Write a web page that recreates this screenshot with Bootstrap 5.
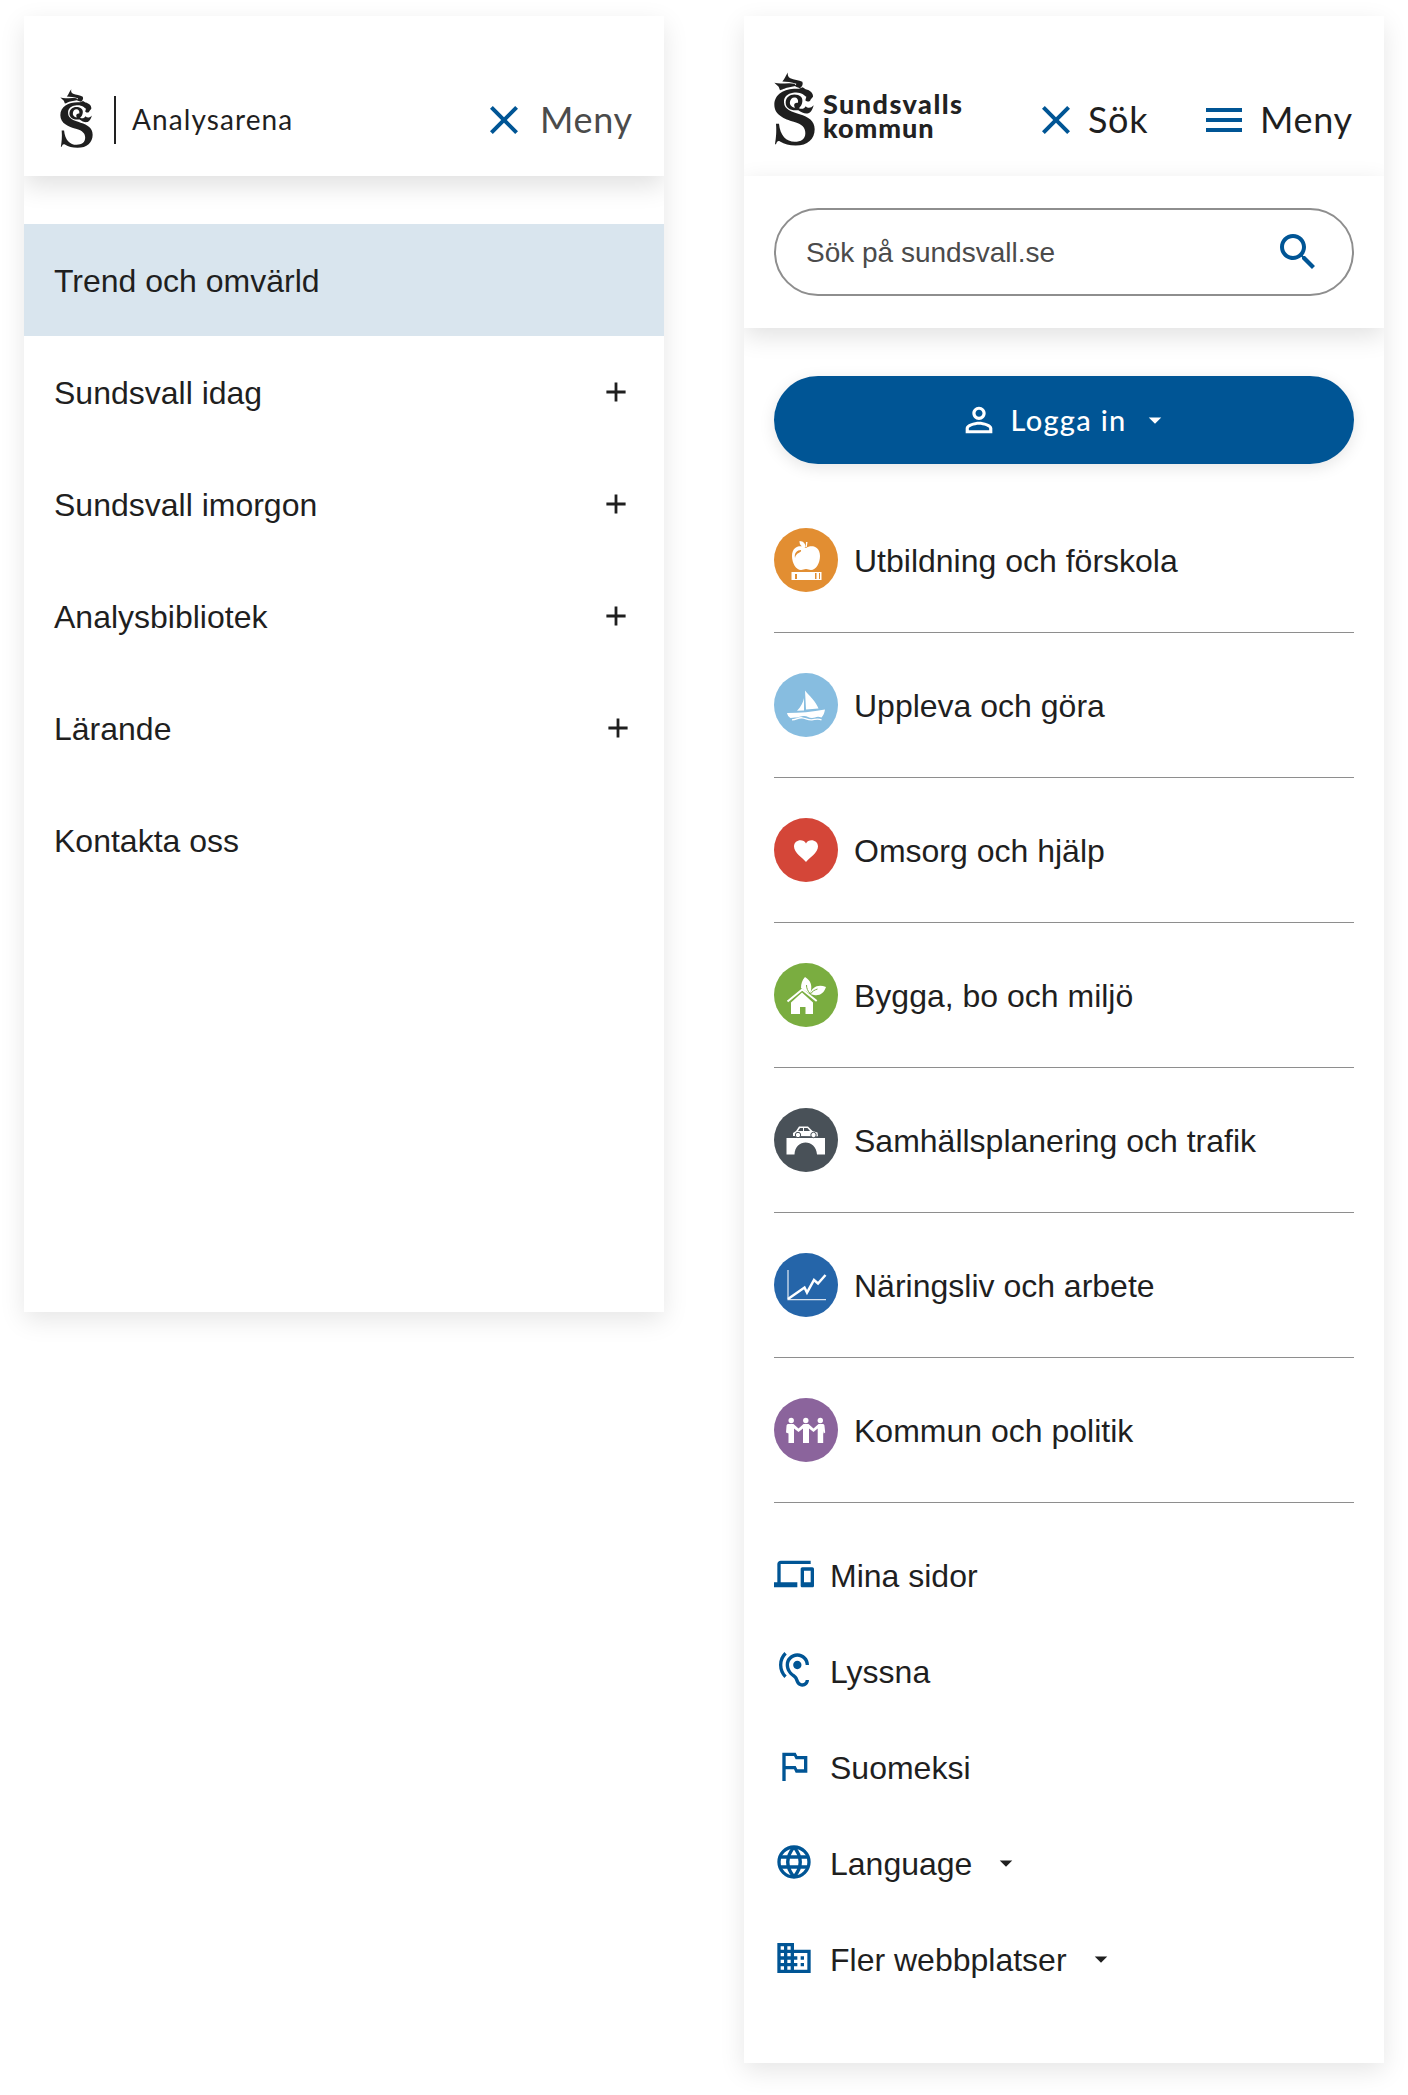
<!DOCTYPE html>
<html lang="sv">
<head>
<meta charset="utf-8">
<meta name="viewport" content="width=device-width, initial-scale=1">
<title>Sundsvalls kommun</title>
<link href="https://cdn.jsdelivr.net/npm/bootstrap@5.3.0/dist/css/bootstrap.min.css" rel="stylesheet">
<style>
body{background:#fff;color:#1f1f1f;font-family:"Liberation Sans",Arial,sans-serif;font-size:32px;line-height:1.2}
a{color:inherit;text-decoration:none}
svg{display:block;flex:none;fill:currentColor}
.stage{padding:16px 24px 32px;gap:80px}
.phone{width:640px;background:#fff;box-shadow:0 8px 24px rgba(0,0,0,.1)}
.phone-short{height:1296px}
.phone-tall{height:2047px}
.topbar{height:160px;padding:48px 30px 0 30px}
.bar-item{height:112px}
.raised{box-shadow:0 10px 24px rgba(0,0,0,.12);clip-path:inset(0 0 -50px 0)}
.head-font{font-family:Lato,sans-serif}
.blue{color:#005595}
.ico40{width:40px;height:40px}
.ico48{width:48px;height:48px}
.caret{width:30px;height:30px}
.tree a{height:112px;padding:2px 36px 0 30px}
.tree svg{margin:0 2px 2px 0}
.tree .inner svg{margin-right:0}
.tree .outer svg{margin-right:2px}
.tree a.current{background:#d9e5ee}
.crest{margin:0 21px 3px 6px}
.rule{width:2px;height:48px;background:#222}
.sitename{font-size:28px;letter-spacing:1.1px}
.toggler{font-size:36px}
.toggler svg.wide{margin-right:12px}
.w-meny{width:94px;letter-spacing:.7px}
.w-sok{width:64px;letter-spacing:.7px}
.muted-ink{color:#4b4b4b}
.wordmark{font-weight:900;font-size:27px;line-height:24px;color:#222;padding-top:20px}
.wordmark .w1{letter-spacing:1.45px}
.wordmark .w2{letter-spacing:.95px}
.searchbox{height:152px;padding:32px 30px;position:relative;background:#fff;box-shadow:0 8px 24px rgba(0,0,0,.12);clip-path:inset(-30px 0 -50px 0)}
.searchbox .field{height:88px;border:2px solid #8e8e8e;border-radius:44px;padding:0 30px}
.searchbox input{font-size:28px;background:none;min-width:0;padding:2px 0 0}
.searchbox input::placeholder{color:#4b4b4b;opacity:1}
.login{height:88px;border-radius:44px;background:#005595;color:#fff;font-size:29px;font-weight:500;box-shadow:0 4px 16px rgba(0,0,0,.1);gap:12px}
.login span{width:117px;letter-spacing:1.3px;white-space:nowrap}
.topics a{height:145px;padding-top:2px;border-bottom:1px solid #8e8e8e}
.topics svg{margin-bottom:2px}
.tools a{height:96px;padding-top:2px}
.tools .caret{margin:0 0 2px 3px}
</style>
<script src="https://cdn.jsdelivr.net/npm/bootstrap@5.3.0/dist/js/bootstrap.bundle.min.js"></script>
</head>
<body>
<svg class="d-none" xmlns="http://www.w3.org/2000/svg">
  <symbol id="dragon" viewBox="103 95 123 221">
    <path d="M178 145C140 142 104 158 104 193C104 224 135 236 162 244C188 251 197 262 197 278C197 295 184 304 165 304C140 304 121 285 118 250H109C111 275 109 292 106 311H109C112 303 115 300 121 303C135 311 148 315 168 315C204 315 225 295 225 266C225 240 206 229 180 221C155 213 134 207 133 186C132 168 144 160 160 157C184 153 192 164 200 169L197 179C204 186 211 184 213 177L220 169C221 158 212 149 198 146L189 140Z"/>
    <path fill-rule="evenodd" d="M138 187C138 171 150 162 164 162C181 162 190 171 188 184C187 193 183 198 178 203C187 207 193 205 198 197C205 204 214 203 222 194C219 207 212 218 203 219C194 220 184 215 176 209C155 212 138 204 138 187ZM151 184C149 193 155 200 166 202C160 191 166 187 175 187C177 177 172 171 164 171C157 171 152 177 151 184Z"/>
    <path d="M104 127C125 133 145 125 164 130L170 136L146 141C133 143 127 149 121 149L117 139ZM145 96C143 103 145 110 152 113C162 118 178 118 188 124C191 131 188 138 181 143L167 138L170 130C156 124 139 124 128 123C135 117 138 104 145 96Z"/>
  </symbol>
  <symbol id="close" viewBox="0 0 24 24"><path d="M19 6.410 17.590 5 12 10.590 6.410 5 5 6.410 10.590 12 5 17.590 6.410 19 12 13.410 17.590 19 19 17.590 13.410 12z"/></symbol>
  <symbol id="plus" viewBox="0 0 20 20"><path d="M8.600.4h2.800v8.200h8.200v2.800h-8.200v8.200H8.600v-8.200H.4V8.600h8.200z"/></symbol>
  <symbol id="drop" viewBox="0 0 24 24"><path d="m7 10 5 5 5-5z"/></symbol>
</svg>

<div class="stage d-flex align-items-start">
  <section class="phone phone-short">
    <header class="topbar raised d-flex justify-content-between align-items-start">
      <a href="#" class="bar-item d-flex align-items-center">
        <svg class="crest" width="33" height="59"><use href="#dragon"/></svg>
        <span class="rule"></span>
        <span class="sitename head-font ms-3">Analysarena</span>
      </a>
      <a href="#" class="bar-item toggler muted-ink head-font d-flex align-items-center">
        <svg class="ico48 blue wide"><use href="#close"/></svg><span class="w-meny">Meny</span>
      </a>
    </header>
    <nav class="tree pt-5">
      <a href="#" class="current d-flex align-items-center">Trend och omvärld</a>
      <a href="#" class="outer d-flex align-items-center justify-content-between">Sundsvall idag<svg width="20" height="20"><use href="#plus"/></svg></a>
      <a href="#" class="outer d-flex align-items-center justify-content-between">Sundsvall imorgon<svg width="20" height="20"><use href="#plus"/></svg></a>
      <a href="#" class="outer d-flex align-items-center justify-content-between">Analysbibliotek<svg width="20" height="20"><use href="#plus"/></svg></a>
      <a href="#" class="d-flex align-items-center justify-content-between">Lärande<svg class="me-0" width="20" height="20"><use href="#plus"/></svg></a>
      <a href="#" class="d-flex align-items-center">Kontakta oss</a>
    </nav>
  </section>

  <section class="phone phone-tall">
    <header class="topbar d-flex align-items-start">
      <a href="#" class="d-flex me-auto pt-2">
        <svg width="41" height="74"><use href="#dragon"/></svg>
        <span class="wordmark head-font ms-2"><span class="w1 d-block">Sundsvalls</span><span class="w2 d-block">kommun</span></span>
      </a>
      <div class="bar-item toggler head-font d-flex align-items-center">
        <a href="#" class="d-flex align-items-center me-5"><svg class="ico48 blue me-2"><use href="#close"/></svg><span class="w-sok">Sök</span></a>
        <a href="#" class="d-flex align-items-center"><svg class="ico48 blue wide" viewBox="0 0 24 24"><path d="M3 18h18v-2H3zm0-5h18v-2H3zm0-7v2h18V6z"/></svg><span class="w-meny">Meny</span></a>
      </div>
    </header>
    <form class="searchbox">
      <div class="field d-flex align-items-center">
        <input class="flex-grow-1 border-0" type="text" placeholder="Sök på sundsvall.se" aria-label="Sök">
        <svg class="ico48 blue" viewBox="0 0 24 24"><path d="M15.500 14h-.79l-.28-.27C15.410 12.590 16 11.110 16 9.500 16 5.910 13.090 3 9.500 3S3 5.910 3 9.500 5.910 16 9.500 16c1.610 0 3.090-.59 4.230-1.570l.27.28v.79l5 4.990L20.490 19zm-6 0C7.010 14 5 11.990 5 9.500S7.010 5 9.500 5 14 7.010 14 9.500 11.990 14 9.500 14z"/></svg>
      </div>
    </form>
    <div class="pt-5" style="padding:0 30px">
      <button type="button" class="login head-font border-0 w-100 d-flex align-items-center justify-content-center">
        <svg class="ico40" viewBox="0 0 24 24"><path d="M12 5.900c1.160 0 2.100.94 2.100 2.100s-.94 2.100-2.100 2.100S9.900 9.160 9.900 8s.94-2.100 2.100-2.100m0 9c2.970 0 6.100 1.460 6.100 2.100v1.100H5.900V17c0-.64 3.130-2.100 6.100-2.100M12 4C9.790 4 8 5.790 8 8s1.790 4 4 4 4-1.790 4-4-1.790-4-4-4zm0 9c-2.670 0-8 1.340-8 4v3h16v-3c0-2.660-5.330-4-8-4z"/></svg>
        <span class="text-start">Logga in</span>
        <svg class="caret"><use href="#drop"/></svg>
      </button>
      <nav class="topics pt-4">
        <a href="#" class="d-flex align-items-center gap-3">
          <svg width="64" height="64" viewBox="0 0 64 64"><circle cx="32" cy="32" r="32" fill="#e28e32"/><g fill="#fff"><path d="M32 20c4-3 14-3 14 8 0 7-4 14-9 14-2 0-3-1-5-1s-3 1-5 1c-5 0-9-7-9-14 0-11 10-11 14-8zM25.500 13c4 0 6 3 6 6-4 0-6-2-6-6zM32 14h1.500l-.7 5h-1z"/><path d="M17.500 44h30v8h-30z"/></g><path d="M21 30c-1-5 2-8 6-8 1 3-5 2-6 8zM21 46h2v5h-2zm20-1h1.500v6H41zm4 0h1v6h-1z" fill="#e28e32"/></svg>
          Utbildning och förskola</a>
        <a href="#" class="d-flex align-items-center gap-3">
          <svg width="64" height="64" viewBox="0 0 64 64"><circle cx="32" cy="32" r="32" fill="#87bde0"/><g fill="#fff"><path d="M31 17.500c4 5 11 11 13.500 18L32 36.500zM30 25v12.500l-7 .2c4-4 6-8 7-12.700zM13 40c13 0 25-1 38-3.500-.5 3-1.500 6-3.500 8-5-2-6 .5-9.500.5s-5-2.500-9-2-6 2-8 1.500l-4.500.5c-2-1-3-3-3.500-5z"/></g><path d="M18 46.800c5 0 6-2.500 10-2s6 2.500 10 2 6-1.500 9.500 0" fill="none" stroke="#fff" stroke-width="1.300"/></svg>
          Uppleva och göra</a>
        <a href="#" class="d-flex align-items-center gap-3">
          <svg width="64" height="64" viewBox="0 0 64 64"><circle cx="32" cy="32" r="32" fill="#d44638"/><path fill="#fff" d="M32 44c-3-4-12-9-12-15.500 0-7 9.500-8.500 12-3 2.500-5.500 12-4 12 3C44 35 35 40 32 44z"/></svg>
          Omsorg och hjälp</a>
        <a href="#" class="d-flex align-items-center gap-3">
          <svg width="64" height="64" viewBox="0 0 64 64"><circle cx="32" cy="32" r="32" fill="#7aad40"/><path fill="#fff" d="m28 29.500 11 10V51h-7.500v-7H26v7h-9V39.500z"/><path d="m13.500 38.500 14.700-12 14.500 11.500" fill="none" stroke="#fff" stroke-width="2"/><path fill="#fff" d="M31 14c6 4 7 8 6 14l-1.500 2.500L27 25c0-4 1-8 4-11zM52 24c-2 6-6 9-12 8l-4-1c2-7 8-10 16-7z"/><path d="M32.500 22c0 3 1 6 4 9 2-3 4-4 7-5" fill="none" stroke="#7aad40"/></svg>
          Bygga, bo och miljö</a>
        <a href="#" class="d-flex align-items-center gap-3">
          <svg width="64" height="64" viewBox="0 0 64 64"><circle cx="32" cy="32" r="32" fill="#495158"/><path fill="#fff" d="M12.500 30H51v16.500h-8C42 30.500 21 30.500 20.500 46.500h-8zM19 28v-3l3-2 3-4.500h9l4.500 4.500 5 1.500.5 4z"/><path fill="#495158" d="M24 23l2-3h3v3zm6-3h3.500l2.500 3h-6zM18 28.500h27v1.200H18z"/><g fill="#fff" stroke="#495158" stroke-width="1"><circle cx="24" cy="27" r="2.700"/><circle cx="39.500" cy="27" r="2.700"/></g></svg>
          Samhällsplanering och trafik</a>
        <a href="#" class="d-flex align-items-center gap-3">
          <svg width="64" height="64" viewBox="0 0 64 64"><circle cx="32" cy="32" r="32" fill="#2565a9"/><path d="M14 17v29.700h38" fill="none" stroke="#d5e1ef" stroke-width="1.300"/><path d="m14 46 16.500-11.500 2.500 5L40 27l4 3.500L51.500 22" fill="none" stroke="#fff" stroke-width="2.500"/></svg>
          Näringsliv och arbete</a>
        <a href="#" class="d-flex align-items-center gap-3">
          <svg width="64" height="64" viewBox="0 0 64 64"><circle cx="32" cy="32" r="32" fill="#8b649c"/><g fill="#fff"><circle cx="17.200" cy="22.500" r="2.700"/><circle cx="31.800" cy="22.500" r="2.700"/><circle cx="46.300" cy="22.500" r="2.700"/><path d="M14.500 26h5l5 4.500 5-4.500h5l5 4.500 5-4.500h4c1 0 2 .6 2 2l.7 6.500-1.500 1-.5-2.500V45h-5.500V30.500L39.500 34 35 30.500V45h-6V30.500L24.500 34 20 30.500V45h-5.500V35.500L12 34.500l.5-6.500c0-1.400 1-2 2-2z"/></g></svg>
          Kommun och politik</a>
      </nav>
      <nav class="tools pt-4">
        <a href="#" class="d-flex align-items-center gap-3"><svg class="ico40 blue mb-1" viewBox="0 0 24 24"><path d="M4 6h18V4H4c-1.100 0-2 .9-2 2v11H0v3h14v-3H4V6zm19 2h-6c-.55 0-1 .45-1 1v10c0 .55.45 1 1 1h6c.55 0 1-.45 1-1V9c0-.55-.45-1-1-1zm-1 9h-4v-7h4v7z"/></svg>Mina sidor</a>
        <a href="#" class="d-flex align-items-center gap-3"><svg class="ico40 blue mb-1" viewBox="0 0 24 24"><path d="M17 20c-.29 0-.56-.06-.76-.15-.71-.37-1.210-.88-1.710-2.380-.51-1.560-1.470-2.290-2.390-3-.79-.61-1.610-1.240-2.320-2.530C9.290 10.980 9 9.930 9 9c0-2.800 2.200-5 5-5s5 2.200 5 5h2c0-3.930-3.070-7-7-7S7 5.070 7 9c0 1.260.38 2.650 1.070 3.900.91 1.650 1.980 2.480 2.850 3.150.81.62 1.390 1.070 1.710 2.050.6 1.820 1.370 2.840 2.730 3.550.51.23 1.070.35 1.640.35 2.210 0 4-1.790 4-4h-2c0 1.100-.9 2-2 2zM7.640 2.640 6.220 1.220C4.230 3.210 3 5.960 3 9s1.230 5.790 3.220 7.780l1.410-1.410C6.010 13.740 5 11.490 5 9s1.010-4.740 2.640-6.360zM11.500 9c0 1.380 1.120 2.500 2.500 2.500s2.500-1.120 2.500-2.500-1.120-2.500-2.500-2.500-2.500 1.120-2.500 2.500z"/></svg>Lyssna</a>
        <a href="#" class="d-flex align-items-center gap-3"><svg class="ico40 blue mb-1" viewBox="0 0 24 24"><path d="m14 6-1-2H5v17h2v-7h5l1 2h7V6h-6zm4 8h-4l-1-2H7V6h5l1 2h5v6z"/></svg>Suomeksi</a>
        <a href="#" class="d-flex align-items-center gap-3"><svg class="ico40 blue mb-1" viewBox="0 0 24 24"><g fill="none" stroke="currentColor" stroke-width="2"><circle cx="12" cy="12" r="9"/><path d="M3.500 9h17M3.500 15h17M12 3c-5 6-5 12 0 18M12 3c5 6 5 12 0 18"/></g></svg>Language<svg class="caret"><use href="#drop"/></svg></a>
        <a href="#" class="d-flex align-items-center gap-3"><svg class="ico40 blue mb-1" viewBox="0 0 24 24"><path d="M12 7V3H2v18h20V7H12zM6 19H4v-2h2v2zm0-4H4v-2h2v2zm0-4H4V9h2v2zm0-4H4V5h2v2zm4 12H8v-2h2v2zm0-4H8v-2h2v2zm0-4H8V9h2v2zm0-4H8V5h2v2zm10 12h-8v-2h2v-2h-2v-2h2v-2h-2V9h8v10zm-2-8h-2v2h2v-2zm0 4h-2v2h2v-2z"/></svg>Fler webbplatser<svg class="caret"><use href="#drop"/></svg></a>
      </nav>
    </div>
  </section>
</div>
</body>
</html>
